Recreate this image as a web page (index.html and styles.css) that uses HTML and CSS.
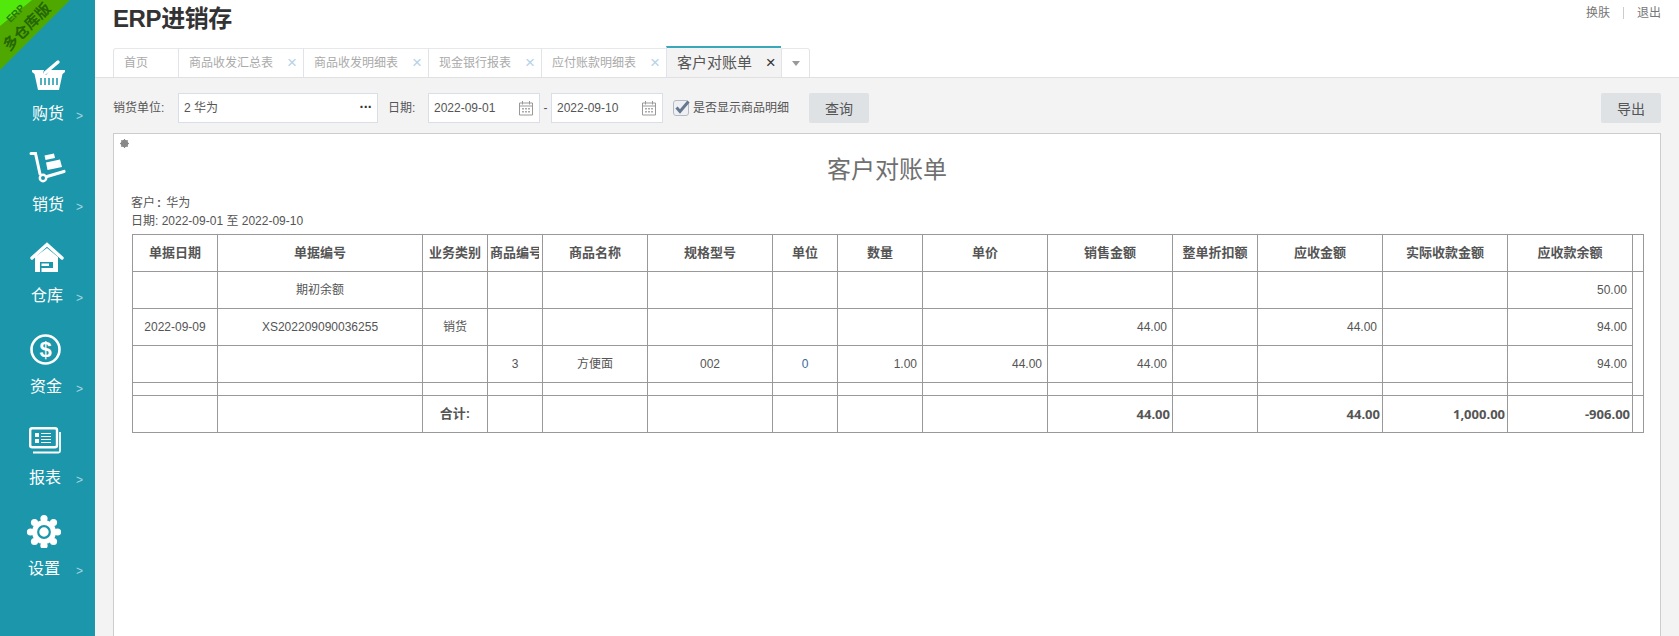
FILE: index.html
```html
<!DOCTYPE html>
<html lang="zh-CN">
<head>
    <meta charset="UTF-8">
    <title>客户对账单</title>
    <link rel="stylesheet" href="styles.css">
</head>
<body>
    <aside class="sidebar">
        <svg class="badge" width="72" height="72" viewBox="0 0 72 72">
            <polygon points="0,0 70,0 0,70" fill="#4fa800"/>
            <polygon points="0,0 32,0 0,26" fill="#52e80c"/>
            <text x="15" y="17" transform="rotate(-45 15 13)" text-anchor="middle" class="badge-small">ERP</text>
            <text x="27" y="32" transform="rotate(-45 27 27)" text-anchor="middle" class="badge-big">多仓库版</text>
        </svg>
        <nav class="nav">
            <a class="nav-item">
                <svg class="nav-icon" viewBox="0 53 95 40">
                    <path d="M45 73L58 62" stroke="#fff" stroke-width="3.4" stroke-linecap="round"/>
                    <path d="M32 70H44L43 73L46 75L50 70H65V72L62.500 74L59 90H38L34.500 74L32 72Z" fill="#fff"/>
                    <path d="M41 78V85M45 78V85M49 78V85M53 78V85M57 78V85" stroke="#1b96ab" stroke-width="1.500"/>
                </svg>
                <span class="nav-label indent-32">购货</span><span class="nav-more">&gt;</span>
            </a>
            <a class="nav-item">
                <svg class="nav-icon" viewBox="0 144 95 40">
                    <path d="M31 153.500H35.500L40 174" fill="none" stroke="#fff" stroke-width="3" stroke-linecap="round"/>
                    <circle cx="43" cy="178" r="3.200" fill="none" stroke="#fff" stroke-width="2.400"/>
                    <path d="M47 176.500L64 171.500" stroke="#fff" stroke-width="3.200" stroke-linecap="round"/>
                    <path d="M44.500 155.500L54 153.500L55 158L45.500 160ZM46 162.500L60 159.500L62 167L47.500 170Z" fill="#fff"/>
                </svg>
                <span class="nav-label indent-32">销货</span><span class="nav-more">&gt;</span>
            </a>
            <a class="nav-item">
                <svg class="nav-icon" viewBox="0 235 95 40">
                    <path d="M32 258L47 244.500L62 258" fill="none" stroke="#fff" stroke-width="3.400" stroke-linecap="round"/>
                    <path d="M35 257L47 248L58 257V272H35Z" fill="#fff"/>
                    <path d="M40 262H53V272H40Z" fill="#1b96ab"/>
                    <path d="M41.500 263.500H49V266H41.500ZM41.500 268H53V272H41.500Z" fill="#fff"/>
                </svg>
                <span class="nav-label indent-31">仓库</span><span class="nav-more">&gt;</span>
            </a>
            <a class="nav-item">
                <svg class="nav-icon" viewBox="0 326 95 40">
                    <circle cx="45.500" cy="349.500" r="14" fill="none" stroke="#fff" stroke-width="2.600"/>
                    <text x="45.500" y="357" text-anchor="middle" class="dollar">$</text>
                </svg>
                <span class="nav-label indent-30">资金</span><span class="nav-more">&gt;</span>
            </a>
            <a class="nav-item">
                <svg class="nav-icon" viewBox="0 417 95 40">
                    <rect x="30.200" y="428.200" width="26.800" height="19" rx="2" fill="none" stroke="#fff" stroke-width="2.400"/>
                    <path d="M60 432V451Q60 452.500 58.500 452.500H33" fill="none" stroke="#fff" stroke-width="1.800"/>
                    <path d="M35 433H39V437H35ZM35 439H39V443H35Z" fill="#fff"/>
                    <path d="M41 433.500H51M41 436.500H51M41 439.500H51M41 442.500H51" stroke="#fff" stroke-width="1"/>
                </svg>
                <span class="nav-label indent-29">报表</span><span class="nav-more">&gt;</span>
            </a>
            <a class="nav-item">
                <svg class="nav-icon" viewBox="0 508 95 40">
                    <g fill="#fff">
                        <circle cx="44" cy="532" r="12"/>
                        <circle cx="44" cy="518.500" r="3.600"/>
                        <circle cx="44" cy="545.500" r="3.600"/>
                        <circle cx="30.500" cy="532" r="3.600"/>
                        <circle cx="57.500" cy="532" r="3.600"/>
                        <circle cx="34.500" cy="522.500" r="3.600"/>
                        <circle cx="53.500" cy="522.500" r="3.600"/>
                        <circle cx="34.500" cy="541.500" r="3.600"/>
                        <circle cx="53.500" cy="541.500" r="3.600"/>
                    </g>
                    <circle cx="44" cy="532" r="5.800" fill="none" stroke="#1b96ab" stroke-width="2.200"/>
                </svg>
                <span class="nav-label indent-28">设置</span><span class="nav-more">&gt;</span>
            </a>
        </nav>
    </aside>

    <div class="main">
        <header class="header">
            <div class="header-top">
                <h1 class="brand">ERP进销存</h1>
                <div class="user-links">
                    <a>换肤</a><i class="user-sep"></i><a>退出</a>
                </div>
            </div>
            <ul class="tabs">
                <li class="tab tab-home">首页</li>
                <li class="tab">商品收发汇总表<span class="tab-close">×</span></li>
                <li class="tab">商品收发明细表<span class="tab-close">×</span></li>
                <li class="tab">现金银行报表<span class="tab-close">×</span></li>
                <li class="tab">应付账款明细表<span class="tab-close">×</span></li>
                <li class="tab tab-active">客户对账单<span class="tab-close">×</span></li>
                <li class="tab tab-more"><span class="caret"></span></li>
            </ul>
        </header>

        <section class="content">
            <form class="toolbar">
                <label class="field-label">销货单位:</label>
                <div class="input input-unit"><span>2 华为</span><b class="dots">···</b></div>
                <label class="field-label label-date">日期:</label>
                <div class="input input-date">
                    <span>2022-09-01</span>
                    <svg class="cal" viewBox="0 0 16 16"><path d="M1.500 3H14.500V15H1.500ZM4.500 1V4.500M11.500 1V4.500M1.500 6H14.500" fill="none" stroke="#999"/><path d="M4 8H6V9.500H4ZM7 8H9V9.500H7ZM10 8H12V9.500H10ZM4 11H6V12.500H4ZM7 11H9V12.500H7ZM10 11H12V12.500H10Z" fill="#aaa"/></svg>
                </div>
                <span class="date-sep">-</span>
                <div class="input input-date">
                    <span>2022-09-10</span>
                    <svg class="cal" viewBox="0 0 16 16"><path d="M1.500 3H14.500V15H1.500ZM4.500 1V4.500M11.500 1V4.500M1.500 6H14.500" fill="none" stroke="#999"/><path d="M4 8H6V9.500H4ZM7 8H9V9.500H7ZM10 8H12V9.500H10ZM4 11H6V12.500H4ZM7 11H9V12.500H7ZM10 11H12V12.500H10Z" fill="#aaa"/></svg>
                </div>
                <span class="check">
                    <svg width="18" height="18" viewBox="0 0 18 18"><rect x="0.500" y="1.500" width="15" height="15" rx="2.500" fill="#eef0f4" stroke="#b4bac4"/><path d="M3.500 8.500L7 12.500L15.500 2.500" fill="none" stroke="#66788f" stroke-width="3"/></svg>
                    是否显示商品明细
                </span>
                <button class="btn btn-query" type="button">查询</button>
                <button class="btn btn-export" type="button">导出</button>
            </form>

            <div class="report">
                <svg class="report-gear" width="9" height="9" viewBox="0 0 9 9"><circle cx="4.500" cy="4.500" r="2.800" fill="none" stroke="#888" stroke-width="2"/><path d="M4.500 0V9M0 4.500H9M1.300 1.300L7.700 7.700M7.700 1.300L1.300 7.700" stroke="#888" stroke-width="1"/></svg>
                <h2 class="report-title">客户对账单</h2>
                <p class="report-meta">客户<b>:</b> 华为</p>
                <p class="report-meta">日期: 2022-09-01 至 2022-09-10</p>
                <table class="ledger">
                    <colgroup>
                        <col class="w85"><col class="w205"><col class="w65"><col class="w55"><col class="w105"><col class="w125"><col class="w65"><col class="w85"><col class="w125"><col class="w125"><col class="w85"><col class="w125"><col class="w125"><col class="w125"><col class="w11">
                    </colgroup>
                    <thead>
                        <tr>
                            <th>单据日期</th><th>单据编号</th><th>业务类别</th><th class="th-clip"><div>商品编号</div></th><th>商品名称</th><th>规格型号</th><th>单位</th><th>数量</th><th>单价</th><th>销售金额</th><th>整单折扣额</th><th>应收金额</th><th>实际收款金额</th><th>应收款余额</th><th></th>
                        </tr>
                    </thead>
                    <tbody>
                        <tr>
                            <td></td><td>期初余额</td><td></td><td></td><td></td><td></td><td></td><td></td><td></td><td></td><td></td><td></td><td></td><td class="num">50.00</td><td rowspan="4"></td>
                        </tr>
                        <tr>
                            <td>2022-09-09</td><td>XS202209090036255</td><td>销货</td><td></td><td></td><td></td><td></td><td></td><td></td><td class="num">44.00</td><td></td><td class="num">44.00</td><td></td><td class="num">94.00</td>
                        </tr>
                        <tr>
                            <td></td><td></td><td></td><td>3</td><td>方便面</td><td>002</td><td class="link">0</td><td class="num">1.00</td><td class="num">44.00</td><td class="num">44.00</td><td></td><td></td><td></td><td class="num">94.00</td>
                        </tr>
                        <tr class="row-spacer">
                            <td></td><td></td><td></td><td></td><td></td><td></td><td></td><td></td><td></td><td></td><td></td><td></td><td></td><td></td>
                        </tr>
                    </tbody>
                    <tfoot>
                        <tr>
                            <td></td><td></td><td class="total-label">合计:</td><td></td><td></td><td></td><td></td><td></td><td></td><td class="total">44.00</td><td></td><td class="total">44.00</td><td class="total">1,000.00</td><td class="total">-906.00</td><td></td>
                        </tr>
                    </tfoot>
                </table>
            </div>
        </section>
    </div>
</body>
</html>
```
FILE: styles.css
```css
* {
    box-sizing: border-box;
}

html, body {
    height: 100%;
}

body {
    margin: 0;
    display: flex;
    overflow: hidden;
    font: 12px/1.4 "Liberation Sans", "Noto Sans CJK SC", sans-serif;
    color: #555;
    background: #f3f3f3;
}

/* sidebar */
.sidebar {
    position: relative;
    flex: 0 0 95px;
    padding-top: 53px;
    background: #1b96ab;
}

.badge {
    position: absolute;
    top: 0;
    left: 0;
    overflow: visible;
}

.badge-small {
    font: bold 10px "Liberation Sans", sans-serif;
    fill: #2a7a08;
}

.badge-big {
    font: bold 15px "Noto Sans CJK SC", sans-serif;
    fill: #256604;
}

.nav-item {
    display: block;
    height: 91px;
    color: #fff;
}

.nav-icon {
    display: block;
    width: 95px;
    height: 40px;
}

.dollar {
    font: bold 22px "Liberation Sans", sans-serif;
    fill: #fff;
}

.nav-label {
    display: inline-block;
    font-size: 16px;
    line-height: 24px;
    margin-top: 9px;
}

.indent-32 { margin-left: 32px; }
.indent-31 { margin-left: 31px; }
.indent-30 { margin-left: 30px; }
.indent-29 { margin-left: 29px; }
.indent-28 { margin-left: 28px; }

.nav-more {
    float: right;
    margin: 15px 12px 0 0;
    font-size: 12px;
    line-height: 16px;
    color: #a8d6e0;
}

/* header + tabs */
.main {
    flex: 1;
    min-width: 0;
    display: flex;
    flex-direction: column;
}

.header {
    height: 78px;
    padding: 0 18px;
    background: #fff;
    border-bottom: 1px solid #e0e0e0;
}

.header-top {
    display: flex;
    justify-content: space-between;
    height: 48px;
}

.brand {
    margin: 0;
    font-size: 24px;
    line-height: 38px;
    font-weight: bold;
    letter-spacing: -0.4px;
    color: #333;
}

.user-links {
    display: flex;
    align-items: center;
    height: 26px;
    color: #777;
}

.user-sep {
    width: 1px;
    height: 12px;
    margin: 0 13px;
    background: #ccc;
}

.tabs {
    display: flex;
    align-items: flex-end;
    margin: 0;
    padding: 0;
    list-style: none;
}

.tab {
    display: flex;
    align-items: center;
    height: 29px;
    padding-left: 10px;
    color: #aaa;
    background: #fff;
    border-left: 1px solid #e0e4e8;
    border-top: 1px solid #e6e8ea;
}

.tab-home {
    padding-right: 30px;
    border-top-left-radius: 3px;
}

.tab-close {
    width: 30px;
    padding-left: 8px;
    text-align: center;
    font-size: 17px;
    color: #b5d3e7;
}

.tab-active {
    height: 31px;
    margin-top: -2px;
    font-size: 15px;
    color: #555;
    background: #f3f3f3;
    border-top: 2px solid #3aa8ba;
    border-left: 1px solid #e0e4e8;
}

.tab-active .tab-close {
    width: 29px;
    color: #333;
}

.tab-more {
    justify-content: center;
    width: 29px;
    padding: 0;
    border-right: 1px solid #e0e4e8;
    border-top-right-radius: 3px;
}

.caret {
    border: 4px solid transparent;
    border-top: 5px solid #999;
    border-bottom: 0;
}

/* toolbar */
.content {
    flex: 1;
    display: flex;
    flex-direction: column;
    min-height: 0;
    padding: 15px 18px 0;
}

.toolbar {
    display: flex;
    align-items: center;
    height: 30px;
    margin-bottom: 10px;
}

.field-label {
    width: 65px;
    color: #555;
}

.label-date {
    width: 40px;
    margin-left: 10px;
}

.input {
    display: flex;
    align-items: center;
    justify-content: space-between;
    height: 30px;
    padding: 0 5px;
    background: #fff;
    border: 1px solid #d8dfe6;
}

.input-unit {
    width: 200px;
}

.dots {
    font-size: 14px;
    letter-spacing: -0.5px;
    color: #333;
}

.input-date {
    width: 112px;
}

.cal {
    width: 16px;
    height: 16px;
}

.date-sep {
    width: 11px;
    text-align: center;
}

.check {
    display: flex;
    align-items: center;
    margin-left: 10px;
    gap: 2px;
}

.btn {
    width: 60px;
    height: 30px;
    padding: 0;
    border: 0;
    border-radius: 2px;
    font: 14px "Liberation Sans", "Noto Sans CJK SC", sans-serif;
    color: #555;
    background: #dfe2e5;
}

.btn-query {
    margin-left: 20px;
}

.btn-export {
    margin-left: auto;
}

/* report */
.report {
    position: relative;
    flex: 1;
    padding: 0 0 0 18px;
    background: #fff;
    border: 1px solid #ccc;
    border-bottom: 0;
}

.report-gear {
    position: absolute;
    top: 5px;
    left: 6px;
}

.report-title {
    margin: 19px 0 7px;
    text-align: center;
    font-size: 24px;
    line-height: 34px;
    font-weight: normal;
    color: #707070;
    padding-right: 18px;
}

.report-meta {
    margin: 0 0 0 -1px;
    line-height: 18px;
    color: #555;
}

.report-meta b {
    margin: 0 2px;
}

.ledger {
    margin-top: 4px;
    width: 1512px;
    table-layout: fixed;
    border-collapse: collapse;
}

.w11 { width: 11px; }
.w55 { width: 55px; }
.w65 { width: 65px; }
.w85 { width: 85px; }
.w105 { width: 105px; }
.w125 { width: 125px; }
.w205 { width: 205px; }

.ledger tr {
    height: 37px;
}

.ledger .row-spacer {
    height: 13px;
}

.ledger th, .ledger td {
    padding: 0;
    border: 1px solid #999;
    text-align: center;
    white-space: nowrap;
}

.ledger th {
    font-size: 13px;
    font-weight: bold;
}

.ledger .th-clip {
    padding: 0 3px 0 2px;
}

.th-clip div {
    overflow: hidden;
}

.ledger .num {
    padding-right: 5px;
    text-align: right;
}

.ledger .link {
    color: #3a6a96;
}

.ledger .total {
    padding-right: 2px;
    text-align: right;
    font: bold 13px "Open Sans", sans-serif;
}

.total-label {
    font-size: 13px;
    font-weight: bold;
}
```
